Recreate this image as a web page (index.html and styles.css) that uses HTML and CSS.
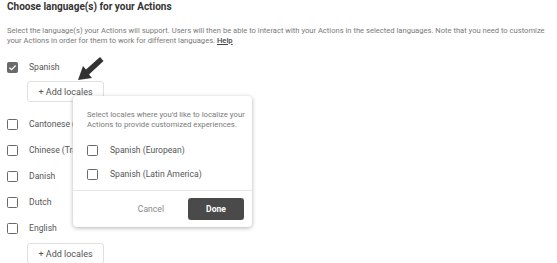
FILE: index.html
```html
<!DOCTYPE html>
<html>
<head>
<meta charset="utf-8">
<link rel="stylesheet" href="styles.css">
</head>
<body>
<div class="page">
  <h1 class="title">Choose language(s) for your Actions</h1>
  <p class="desc">Select the language(s) your Actions will support. Users will then be able to interact with your Actions in the selected languages. Note that you need to customize your Actions in order for them to work for different languages. <a class="help">Help</a></p>

  <div class="lang-row"><span class="box checked"><svg viewBox="0 0 12 12" width="11" height="11"><path d="M2.6 6.2 L5 8.4 L9.4 3.8" fill="none" stroke="#fff" stroke-width="1.4"/></svg></span><span class="label">Spanish</span></div>
  <button class="add-btn">+ Add locales</button>

  <div class="lang-row first-unchecked"><span class="box"></span><span class="label">Cantonese (Hong Kong)</span></div>
  <div class="lang-row"><span class="box"></span><span class="label">Chinese (Traditional)</span></div>
  <div class="lang-row"><span class="box"></span><span class="label">Danish</span></div>
  <div class="lang-row"><span class="box"></span><span class="label">Dutch</span></div>
  <div class="lang-row"><span class="box"></span><span class="label">English</span></div>
  <button class="add-btn second">+ Add locales</button>

  <svg class="arrow" viewBox="0 0 32 30" width="32" height="30">
    <path d="M28 1 L14 13.5 L11 10 L6 24 L20 22 L17 18.5 L31.5 5 Z" fill="#333"/>
  </svg>

  <div class="popup">
    <p class="popup-text">Select locales where you'd like to localize your Actions to provide customized experiences.</p>
    <div class="opt-row"><span class="box"></span><span class="opt-label">Spanish (European)</span></div>
    <div class="opt-row"><span class="box"></span><span class="opt-label">Spanish (Latin America)</span></div>
    <div class="popup-footer">
      <button class="cancel">Cancel</button>
      <button class="done">Done</button>
    </div>
  </div>
</div>
</body>
</html>
```
FILE: styles.css
```css
html, body {
  margin: 0;
  padding: 0;
  background: #fff;
}
body {
  font-family: Roboto, "Liberation Sans", Arial, sans-serif;
  width: 557px;
  height: 263px;
  overflow: hidden;
}
.page {
  position: relative;
  padding: 0 7px;
  height: 263px;
  overflow: hidden;
}
.title {
  margin: 0;
  font-size: 10px;
  font-weight: 700;
  line-height: 14px;
  color: #333;
}
.desc {
  margin: 12px 0 0;
  font-size: 7.6px;
  line-height: 10px;
  color: #7a7a7a;
}
.help {
  color: #444;
  font-weight: 500;
  text-decoration: underline;
}
.lang-row {
  display: flex;
  align-items: center;
  height: 26px;
}
.lang-row:first-of-type {
  margin-top: 8px;
}
.first-unchecked {
  margin-top: 9px;
}
.box {
  box-sizing: border-box;
  width: 11px;
  height: 11px;
  border: 1.5px solid #6a6a6a;
  border-radius: 1.5px;
  flex: none;
  display: flex;
  align-items: center;
  justify-content: center;
}
.box.checked {
  background: #6a6a6a;
  border-color: #6a6a6a;
}
.box svg {
  display: block;
  flex: none;
}
.label {
  margin-left: 11px;
  font-size: 8.6px;
  color: #555;
  white-space: nowrap;
}
.add-btn {
  display: block;
  margin: 1px 0 0 20px;
  width: 77px;
  height: 21px;
  padding: 0;
  border: 1px solid #e0e0e0;
  border-radius: 3px;
  background: #fff;
  font-family: inherit;
  font-size: 9px;
  color: #555;
}
.add-btn.second {
  margin-top: 2px;
}
.arrow {
  position: absolute;
  left: 72px;
  top: 56px;
}
.popup {
  position: absolute;
  left: 73px;
  top: 96px;
  width: 179px;
  height: 131px;
  box-sizing: border-box;
  background: #fff;
  border-radius: 4px;
  box-shadow: 0 1px 4px rgba(0, 0, 0, 0.3);
  display: flex;
  flex-direction: column;
}
.popup-text {
  margin: 0;
  padding: 14px 0 0 14px;
  font-size: 7.75px;
  line-height: 9.5px;
  color: #7a7a7a;
}
.opt-row {
  display: flex;
  align-items: center;
  height: 24px;
  padding-left: 14px;
}
.opt-row:first-of-type {
  margin-top: 9px;
}
.opt-label {
  margin-left: 12px;
  font-size: 8.6px;
  color: #555;
  white-space: nowrap;
}
.popup-footer {
  margin-top: auto;
  border-top: 1px solid #e6e6e6;
  height: 37px;
  box-sizing: border-box;
  display: flex;
  align-items: center;
  justify-content: flex-end;
  padding-right: 8px;
  gap: 20px;
}
.cancel {
  border: none;
  background: none;
  font-family: inherit;
  font-size: 8.6px;
  color: #888;
  padding: 0 4px;
}
.done {
  width: 56px;
  height: 22px;
  border: none;
  border-radius: 3px;
  background: #4a4a4a;
  color: #fff;
  font-family: inherit;
  font-size: 8.6px;
  font-weight: 700;
  padding: 0;
}
```
